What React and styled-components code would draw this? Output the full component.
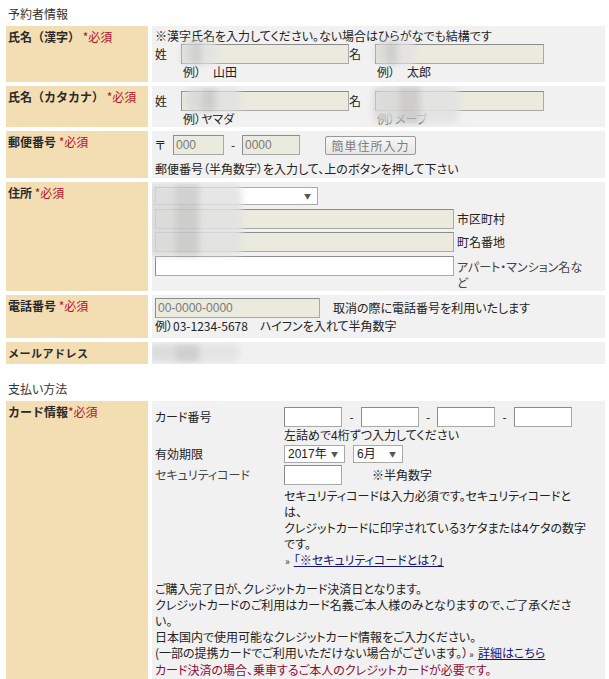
import React from 'react';
import styled, { createGlobalStyle } from 'styled-components';

// 予約フォーム（予約者情報・支払い方法）
const GlobalStyle = createGlobalStyle`
  html, body {
    margin: 0;
    padding: 0;
    background: #fff;
  }
  body {
    font-family: "Noto Sans CJK JP", "Liberation Sans", sans-serif;
    font-size: 12px;
    line-height: 16px;
    color: #222;
    font-feature-settings: "palt";
  }
`;

const App = () => {
  return (
    <>
      <GlobalStyle />
      <Page>
        <SectionTitle>予約者情報</SectionTitle>
        <FormGrid>
          {/* 氏名（漢字） */}
          <Label>
            氏名（漢字） <Req>*必須</Req>
          </Label>
          <Value $pad="2px 3px 2px">
            <Line>※漢字氏名を入力してください。ない場合はひらがなでも結構です</Line>
            <NameGrid>
              <Tag>姓</Tag>
              <FieldWrap>
                <Field $w={168} $tone="filled" />
                <Smudge $l={0} $t={-3} $w={36} $h={24} />
              </FieldWrap>
              <Tag>名</Tag>
              <FieldWrap>
                <Field $w={169} $tone="filled" />
                <Smudge $l={0} $t={-3} $w={40} $h={24} />
              </FieldWrap>
              <span />
              <Example>例）　山田</Example>
              <span />
              <Example>例）　太郎</Example>
            </NameGrid>
          </Value>

          {/* 氏名（カタカナ） */}
          <Label>
            氏名（カタカナ） <Req>*必須</Req>
          </Label>
          <Value $pad="5px 3px 0">
            <NameGrid>
              <Tag>姓</Tag>
              <FieldWrap>
                <Field $w={168} $tone="filled" />
                <Smudge $l={4} $t={-3} $w={56} $h={24} />
              </FieldWrap>
              <Tag>名</Tag>
              <FieldWrap>
                <Field $w={169} $tone="filled" />
                <Smudge $l={-2} $t={-5} $w={86} $h={38} />
              </FieldWrap>
              <span />
              <Example>例）ヤマダ</Example>
              <span />
              <Example>例）メーブ</Example>
            </NameGrid>
          </Value>

          {/* 郵便番号 */}
          <Label>
            郵便番号 <Req>*必須</Req>
          </Label>
          <Value $pad="4px 3px 1px">
            <InlineRow>
              <Mark $w={18}>〒</Mark>
              <Field $w={51} $tone="filled" defaultValue="000" />
              <Mark $w={18} $center>-</Mark>
              <Field $w={58} $tone="filled" defaultValue="0000" />
              <Spacer $w={25} />
              <GrayButton type="button">簡単住所入力</GrayButton>
            </InlineRow>
            <Line $top={6}>郵便番号（半角数字）を入力して、上のボタンを押して下さい</Line>
          </Value>

          {/* 住所 */}
          <Label>
            住所 <Req>*必須</Req>
          </Label>
          <Value $pad="5px 3px 0" $relative>
            <SelectBox $w={163}>
              <select defaultValue="" aria-label="都道府県">
                <option value=""></option>
              </select>
              <Arrow>▼</Arrow>
            </SelectBox>
            <AddressRow $top={4}>
              <Field $w={299} $tone="filled" />
              <AddressNote>市区町村</AddressNote>
            </AddressRow>
            <AddressRow $top={3}>
              <Field $w={299} $tone="filled" />
              <AddressNote>町名番地</AddressNote>
            </AddressRow>
            <AddressRow $top={4}>
              <Field $w={299} />
              <AddressNote $light>
                アパート・マンション名な
                <br />ど
              </AddressNote>
            </AddressRow>
            <Smudge $l={-6} $t={2} $w={96} $h={72} />
          </Value>

          {/* 電話番号 */}
          <Label>
            電話番号 <Req>*必須</Req>
          </Label>
          <Value $pad="3px 3px 4px">
            <InlineRow>
              <Field $w={165} $tone="filled" defaultValue="00-0000-0000" />
              <Spacer $w={13} />
              <span>取消の際に電話番号を利用いたします</span>
            </InlineRow>
            <Line>例）03-1234-5678　ハイフンを入れて半角数字</Line>
          </Value>

          {/* メールアドレス */}
          <Label $small>メールアドレス</Label>
          <Value $pad="2px 3px" $relative>
            <Line>&nbsp;</Line>
            <Smudge $l={-4} $t={2} $w={92} $h={18} />
          </Value>
        </FormGrid>

        <SectionTitle $top={17}>支払い方法</SectionTitle>
        <FormGrid>
          <Label>
            カード情報<Req>*必須</Req>
          </Label>
          <Value $pad="6px 3px 6px">
            <CardGrid>
              <CardLabel>カード番号</CardLabel>
              <div>
                <InlineRow>
                  <Field $w={58} />
                  <Mark $w={19} $center>-</Mark>
                  <Field $w={58} />
                  <Mark $w={18} $center>-</Mark>
                  <Field $w={58} />
                  <Mark $w={19} $center>-</Mark>
                  <Field $w={58} />
                </InlineRow>
                <Line>左詰めで4桁ずつ入力してください</Line>
              </div>

              <CardLabel $top={1}>有効期限</CardLabel>
              <InlineRow>
                <SelectBox $w={61} $h={18}>
                  <select defaultValue="2017" aria-label="年">
                    <option value="2017">2017年</option>
                  </select>
                  <Arrow>▼</Arrow>
                </SelectBox>
                <Spacer $w={8} />
                <SelectBox $w={50} $h={18}>
                  <select defaultValue="6" aria-label="月">
                    <option value="6">6月</option>
                  </select>
                  <Arrow>▼</Arrow>
                </SelectBox>
              </InlineRow>

              <CardLabel $light>セキュリティコード</CardLabel>
              <div>
                <InlineRow>
                  <Field $w={58} />
                  <Spacer $w={30} />
                  <span>※半角数字</span>
                </InlineRow>
                <Paragraph $top={3}>
                  セキュリティコードは入力必須です。セキュリティコードと
                  <br />
                  は、
                  <br />
                  クレジットカードに印字されている3ケタまたは4ケタの数字
                  <br />
                  です。
                </Paragraph>
                <LinkLine>
                  <Chevron>»</Chevron>
                  <TextLink href="#">「※セキュリティコードとは？」</TextLink>
                </LinkLine>
              </div>
            </CardGrid>

            <Notice>
              ご購入完了日が、クレジットカード決済日となります。
              <br />
              クレジットカードのご利用はカード名義ご本人様のみとなりますので、ご了承くださ
              <br />
              い。
              <br />
              日本国内で使用可能なクレジットカード情報をご入力ください。
              <br />
              (一部の提携カードでご利用いただけない場合がございます。）
              <Chevron>»</Chevron>
              <TextLink href="#">詳細はこちら</TextLink>
              <br />
              <Warning>カード決済の場合、乗車するご本人のクレジットカードが必要です。</Warning>
            </Notice>
          </Value>
        </FormGrid>
      </Page>
    </>
  );
};

const Page = styled.div`
  padding: 6px 4px 0 6px;
  width: 609px;
  box-sizing: border-box;
`;

const SectionTitle = styled.div`
  margin-top: ${(props) => props.$top || 0}px;
  padding-left: 2px;
  height: 16px;
  margin-bottom: 4px;
  color: #333;
`;

const FormGrid = styled.div`
  display: grid;
  grid-template-columns: 142px 1fr;
  gap: 4px;
`;

const Label = styled.div`
  background: #f3ddb3;
  padding: 3px 2px;
  font-weight: bold;
  color: #2a2a2a;
  font-size: ${(props) => (props.$small ? '11px' : '12px')};
  white-space: nowrap;
  letter-spacing: ${(props) => (props.$small ? '0.5px' : '0')};
  font-feature-settings: normal;
`;

const Req = styled.span`
  color: #b5122e;
  font-weight: normal;
`;

const Value = styled.div`
  background: #f1f1f1;
  padding: ${(props) => props.$pad || '3px'};
  position: ${(props) => (props.$relative ? 'relative' : 'static')};
  overflow: hidden;
`;

const Line = styled.div`
  margin-top: ${(props) => props.$top || 0}px;
  white-space: nowrap;
`;

const NameGrid = styled.div`
  display: grid;
  grid-template-columns: 26px 168px 26px 169px;
  align-items: center;
`;

const Tag = styled.span`
  line-height: 20px;
`;

const FieldWrap = styled.span`
  position: relative;
  display: inline-flex;
`;

const Field = styled.input`
  box-sizing: border-box;
  width: ${(props) => props.$w}px;
  height: ${(props) => props.$h || 20}px;
  margin: 0;
  padding: 0 2px;
  border: 1px solid #a9a9a9;
  border-top-color: #8c8c8c;
  border-left-color: #8c8c8c;
  border-radius: 0;
  background: ${(props) => (props.$tone === 'filled' ? '#ebeadf' : '#ffffff')};
  color: #7a7a7a;
  font-family: "Liberation Sans", "Noto Sans CJK JP", sans-serif;
  font-size: 12px;
  outline: none;
`;

const Smudge = styled.span`
  position: absolute;
  left: ${(props) => props.$l}px;
  top: ${(props) => props.$t}px;
  width: ${(props) => props.$w}px;
  height: ${(props) => props.$h}px;
  background:
    linear-gradient(90deg, #d9d9d9 0 30%, #c9c9c9 30% 55%, #e2e2e2 55% 100%);
  border-radius: 8px;
  filter: blur(3px);
  opacity: 0.85;
  pointer-events: none;
`;

const Example = styled.span`
  padding-left: 2px;
  line-height: 16px;
`;

const InlineRow = styled.div`
  display: flex;
  align-items: center;
  white-space: nowrap;
`;

const Mark = styled.span`
  display: inline-block;
  width: ${(props) => props.$w}px;
  text-align: ${(props) => (props.$center ? 'center' : 'left')};
`;

const Spacer = styled.span`
  display: inline-block;
  width: ${(props) => props.$w}px;
`;

const GrayButton = styled.button`
  box-sizing: border-box;
  width: 91px;
  height: 19px;
  padding: 0;
  border: 1px solid #9a9a9a;
  border-radius: 2px;
  background: linear-gradient(#f7f7f7, #e6e6e6);
  color: #7c7c7c;
  font-family: "Noto Sans CJK JP", sans-serif;
  font-size: 12px;
  letter-spacing: 1px;
  line-height: 17px;
`;

const SelectBox = styled.span`
  box-sizing: border-box;
  display: inline-flex;
  align-items: center;
  width: ${(props) => props.$w}px;
  height: ${(props) => props.$h || 18}px;
  background: #fff;
  border: 1px solid #a9a9a9;

  & select {
    flex: 1;
    min-width: 0;
    height: 100%;
    border: none;
    background: transparent;
    appearance: none;
    padding: 0 0 0 3px;
    font-family: "Liberation Sans", "Noto Sans CJK JP", sans-serif;
    font-size: 12px;
    color: #222;
    outline: none;
  }
`;

const Arrow = styled.span`
  font-size: 7px;
  color: #555;
  padding: 0 6px 0 2px;
  line-height: 1;
`;

const AddressRow = styled.div`
  display: flex;
  align-items: flex-start;
  margin-top: ${(props) => props.$top || 0}px;
`;

const AddressNote = styled.span`
  padding-left: 3px;
  padding-top: ${(props) => (props.$light ? '3px' : '0')};
  line-height: ${(props) => (props.$light ? '16px' : '20px')};
  white-space: nowrap;
  color: ${(props) => (props.$light ? '#444' : '#222')};
`;

const CardGrid = styled.div`
  display: grid;
  grid-template-columns: 129px 1fr;
  row-gap: 2px;
  align-items: start;
`;

const CardLabel = styled.span`
  padding-top: ${(props) => (props.$top !== undefined ? props.$top : 2)}px;
  line-height: 16px;
  color: ${(props) => (props.$light ? '#444' : '#222')};
`;

const Paragraph = styled.div`
  margin-top: ${(props) => props.$top || 0}px;
  line-height: 16px;
  white-space: nowrap;
`;

const LinkLine = styled.div`
  line-height: 16px;
`;

const Chevron = styled.span`
  font-size: 10px;
  margin: 0 4px 0 1px;
  color: #333;
`;

const TextLink = styled.a`
  color: #14147a;
  text-decoration: underline;
`;

const Notice = styled.div`
  margin-top: 12px;
  line-height: 16px;
  white-space: nowrap;
`;

const Warning = styled.span`
  color: #8c0a34;
`;

export default App;
